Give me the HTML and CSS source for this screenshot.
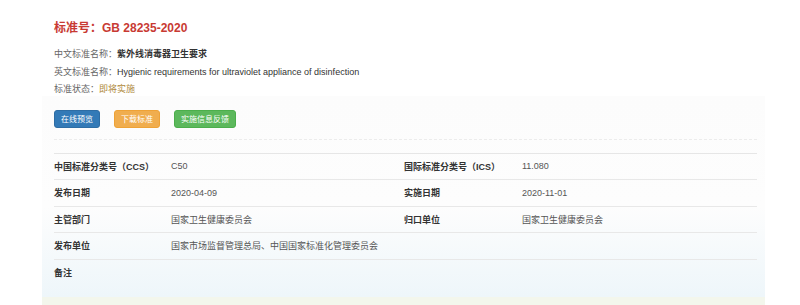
FILE: index.html
```html
<!DOCTYPE html>
<html lang="zh-CN">
<head>
    <meta charset="UTF-8">
    <meta name="viewport" content="width=device-width, initial-scale=1.0">
    <title>GB 28235-2020</title>
    <link rel="stylesheet" href="styles.css">
</head>
<body>
    <div class="container">
        <div class="header">
            <h1 class="std-no">标准号：GB 28235-2020</h1>
            <div class="info">
                <div class="info-line"><span class="info-label">中文标准名称：</span><b class="info-cn">紫外线消毒器卫生要求</b></div>
                <div class="info-line"><span class="info-label">英文标准名称：</span><span>Hygienic requirements for ultraviolet appliance of disinfection</span></div>
                <div class="info-line"><span class="info-label">标准状态：</span><span class="status">即将实施</span></div>
            </div>
        </div>
        <div class="panel">
            <div class="actions">
                <button class="btn btn-blue">在线预览</button>
                <button class="btn btn-orange">下载标准</button>
                <button class="btn btn-green">实施信息反馈</button>
            </div>
            <div class="detail">
                <div class="row">
                    <div class="cell-label">中国标准分类号（CCS）</div>
                    <div class="cell-value">C50</div>
                    <div class="cell-label">国际标准分类号（ICS）</div>
                    <div class="cell-value">11.080</div>
                </div>
                <div class="row">
                    <div class="cell-label">发布日期</div>
                    <div class="cell-value">2020-04-09</div>
                    <div class="cell-label">实施日期</div>
                    <div class="cell-value">2020-11-01</div>
                </div>
                <div class="row">
                    <div class="cell-label">主管部门</div>
                    <div class="cell-value">国家卫生健康委员会</div>
                    <div class="cell-label">归口单位</div>
                    <div class="cell-value">国家卫生健康委员会</div>
                </div>
                <div class="row">
                    <div class="cell-label">发布单位</div>
                    <div class="cell-value wide">国家市场监督管理总局、中国国家标准化管理委员会</div>
                </div>
                <div class="row last">
                    <div class="cell-label">备注</div>
                    <div class="cell-value wide"></div>
                </div>
            </div>
        </div>
        <div class="footer-strip"></div>
    </div>
</body>
</html>
```

FILE: styles.css
```css
body, html {
    margin: 0;
    padding: 0;
    background-color: #fff;
    font-family: 'Liberation Sans', 'Noto Sans CJK SC', sans-serif;
    color: #333;
    overflow: hidden;
}
.container {
    width: 723px;
    margin-left: 42px;
}
.header {
    padding: 20px 12px 0;
}
.std-no {
    margin: 0;
    font-size: 12px;
    line-height: 16px;
    font-weight: bold;
    color: #c83a33;
}
.info {
    margin-top: 10px;
    font-size: 9px;
}
.info-line {
    line-height: 17.5px;
}
.info-label {
    color: #666;
}
.info-cn {
    color: #333;
}
.status {
    color: #b08a3c;
}
.panel {
    margin-top: -3px;
    padding: 14px 8px 12px 12px;
    background: linear-gradient(to bottom, #fcfcfc 0%, #fdfdfd 55%, #eef6fa 100%);
}
.actions {
    display: flex;
    gap: 14px;
    padding-bottom: 11px;
    border-bottom: 1px dashed #ececec;
}
.btn {
    height: 18px;
    padding: 0 6px;
    font-family: inherit;
    font-size: 8px;
    color: #fff;
    border: 1px solid transparent;
    border-radius: 3px;
}
.btn-blue {
    background-color: #337ab7;
    border-color: #2e6da4;
}
.btn-orange {
    background-color: #f0ad4e;
    border-color: #eea236;
}
.btn-green {
    background-color: #5cb85c;
    border-color: #4cae4c;
}
.detail {
    margin-top: 13px;
    border-top: 1px solid #e6e6e6;
    font-size: 9px;
}
.row {
    display: grid;
    grid-template-columns: 117px 233px 118px 1fr;
    align-items: center;
    height: 25.5px;
    border-bottom: 1px solid #e8e8e8;
}
.row.last {
    border-bottom: none;
}
.cell-label {
    font-weight: bold;
    color: #333;
}
.cell-value {
    color: #555;
}
.cell-value.wide {
    grid-column: span 3;
}
.footer-strip {
    height: 8px;
    background-color: #f3f6ec;
}
```
